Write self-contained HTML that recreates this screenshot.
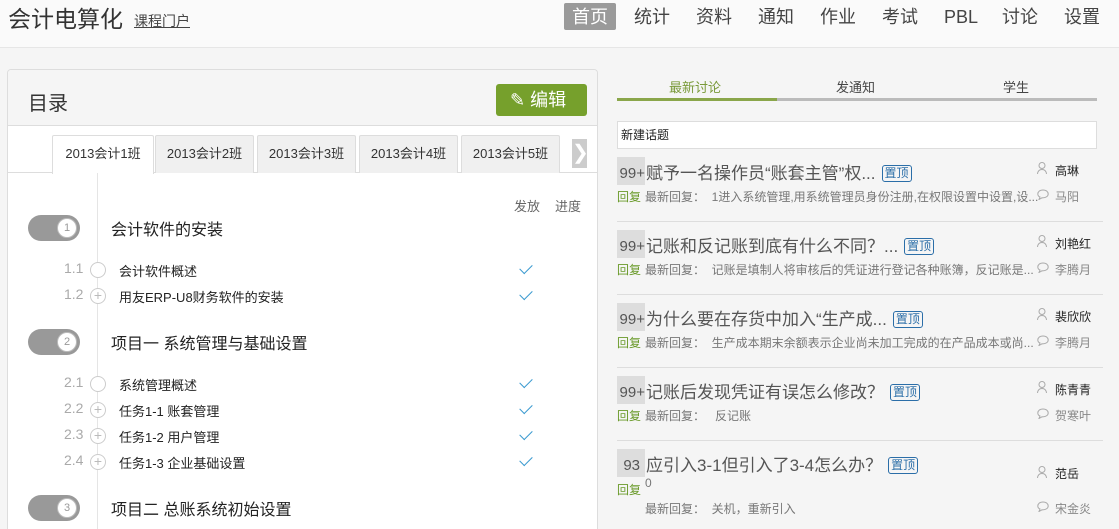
<!DOCTYPE html>
<html><head><meta charset="utf-8"><style>
*{margin:0;padding:0;box-sizing:border-box}
html,body{width:1119px;height:529px;overflow:hidden}
body{background:#f5f5f5;font-family:"Liberation Sans","Noto Sans CJK SC",sans-serif;color:#333;position:relative}
.a{position:absolute;white-space:nowrap}
.hdr{position:absolute;left:0;top:0;width:1119px;height:48px;background:#fafafa;border-bottom:1px solid #e6e6e6}
.nav{font-size:18px;color:#444;top:5px;line-height:24px}
.panel{position:absolute;left:7px;top:69px;width:591px;height:460px;border:1px solid #ddd;border-bottom:none;border-radius:4px 4px 0 0;background:#fff;overflow:hidden}
.ph{position:absolute;left:0;top:0;width:100%;height:56px;background:#f5f5f5;border-bottom:1px solid #ddd}
.tab{position:absolute;top:65px;height:38px;width:99px;background:#f0f0f0;border:1px solid #ddd;border-bottom:none;font-size:13px;text-align:center;line-height:36px;border-radius:2px 2px 0 0}
.pill{position:absolute;left:20px;width:52px;height:26px;border-radius:13px;background:#999}
.pill span{position:absolute;right:3px;top:3px;width:20px;height:20px;border-radius:50%;background:#fff;color:#999;font-size:11px;text-align:center;line-height:18px;border:1px solid #bbb}
.ch{font-size:16px;color:#222;left:103px}
.num{font-size:14px;color:#aaa;left:56px}
.sub{font-size:13px;color:#222;left:111px}
.dot{position:absolute;left:82px;width:16px;height:16px;border-radius:50%;border:1px solid #ccc;background:#fff;color:#bbb;font-size:14px;line-height:13px;text-align:center}
.chk{position:absolute;left:512px;width:12px;height:7px;border-left:1.5px solid #3a9ad0;border-bottom:1.5px solid #3a9ad0;transform:rotate(-45deg)}
.badge{position:absolute;left:617px;width:28px;height:28px;background:#ddd;color:#555;font-size:15px;line-height:20px;padding-top:7px;text-align:right}
.tt{font-size:17px;color:#555;left:646px}
.tag{display:inline-block;border:1px solid #2b6ea8;color:#2b6ea8;border-radius:3px;font-size:12px;line-height:15px;padding:0 2px;margin-left:6px;vertical-align:2px}
.rp{font-size:12px;color:#6a9a2a;left:617px}
.ls{font-size:12px;color:#777;left:645px}
.nm{font-size:12px;color:#222;left:1055px}
.nm2{font-size:12px;color:#888;left:1055px}
.sep{position:absolute;left:617px;width:486px;height:1px;background:#ddd}
.ui{position:absolute;left:1037px;width:10px;height:12px}
</style></head><body>
<div class="hdr"></div>
<div class="a" style="left:8px;top:4px;font-size:23px;color:#333;line-height:30px">会计电算化</div>
<div class="a" style="left:134px;top:11px;font-size:14px;color:#444;text-decoration:underline">课程门户</div>
<div class="a" style="left:564px;top:3px;width:52px;height:27px;background:#9a9a9a;border-radius:2px"></div>
<div class="a nav" style="left:572px;color:#fff">首页</div>
<div class="a nav" style="left:634px">统计</div>
<div class="a nav" style="left:696px">资料</div>
<div class="a nav" style="left:758px">通知</div>
<div class="a nav" style="left:820px">作业</div>
<div class="a nav" style="left:882px">考试</div>
<div class="a nav" style="left:944px">PBL</div>
<div class="a nav" style="left:1002px">讨论</div>
<div class="a nav" style="left:1064px">设置</div>

<div class="panel">
<div class="ph"></div>
<div class="a" style="left:20px;top:17px;font-size:20px;color:#333">目录</div>
<div class="a" style="left:488px;top:14px;width:91px;height:32px;background:#76a02c;border-radius:3px;color:#fff;font-size:18px;line-height:32px;padding-left:14px">✎ 编辑</div>
<div style="position:absolute;left:0;top:102px;width:100%;height:1px;background:#ddd"></div>
<div class="tab" style="left:44px;width:102px;background:#fff;height:39px">2013会计1班</div>
<div class="tab" style="left:147px">2013会计2班</div>
<div class="tab" style="left:249px">2013会计3班</div>
<div class="tab" style="left:351px">2013会计4班</div>
<div class="tab" style="left:453px">2013会计5班</div>
<div class="a" style="left:564px;top:69px;width:15px;height:29px;background:#ccc;color:#fff;font-size:20px;line-height:29px;text-align:center">❯</div>
<div style="position:absolute;left:89px;top:103px;width:1px;height:357px;background:#e5e5e5"></div>
<div class="a" style="left:506px;top:126px;font-size:13px;color:#666">发放</div>
<div class="a" style="left:547px;top:126px;font-size:13px;color:#666">进度</div>

<div class="pill" style="top:145px"><span>1</span></div>
<div class="a ch" style="top:146px">会计软件的安装</div>
<div class="a num" style="top:190px">1.1</div><div class="dot" style="top:192px"></div><div class="a sub" style="top:191px">会计软件概述</div><div class="chk" style="top:194px"></div>
<div class="a num" style="top:216px">1.2</div><div class="dot" style="top:218px">+</div><div class="a sub" style="top:217px">用友ERP-U8财务软件的安装</div><div class="chk" style="top:220px"></div>

<div class="pill" style="top:259px"><span>2</span></div>
<div class="a ch" style="top:260px">项目一 系统管理与基础设置</div>
<div class="a num" style="top:304px">2.1</div><div class="dot" style="top:306px"></div><div class="a sub" style="top:305px">系统管理概述</div><div class="chk" style="top:308px"></div>
<div class="a num" style="top:330px">2.2</div><div class="dot" style="top:332px">+</div><div class="a sub" style="top:331px">任务1-1 账套管理</div><div class="chk" style="top:334px"></div>
<div class="a num" style="top:356px">2.3</div><div class="dot" style="top:358px">+</div><div class="a sub" style="top:357px">任务1-2 用户管理</div><div class="chk" style="top:360px"></div>
<div class="a num" style="top:382px">2.4</div><div class="dot" style="top:384px">+</div><div class="a sub" style="top:383px">任务1-3 企业基础设置</div><div class="chk" style="top:386px"></div>

<div class="pill" style="top:425px"><span>3</span></div>
<div class="a ch" style="top:426px">项目二 总账系统初始设置</div>
</div>

<div class="a" style="left:669px;top:77px;font-size:13px;color:#7a9a3a">最新讨论</div>
<div class="a" style="left:836px;top:77px;font-size:13px;color:#444">发通知</div>
<div class="a" style="left:1003px;top:77px;font-size:13px;color:#444">学生</div>
<div class="a" style="left:617px;top:98px;width:480px;height:3px;background:#bbb"></div>
<div class="a" style="left:617px;top:98px;width:160px;height:3px;background:#8aa64a"></div>
<div class="a" style="left:617px;top:121px;width:480px;height:28px;background:#fff;border:1px solid #ddd;font-size:12px;line-height:26px;padding-left:3px;color:#222">新建话题</div>

<svg width="0" height="0" style="position:absolute;left:0;top:0"><defs>
<symbol id="u" viewBox="0 0 10 12"><circle cx="5" cy="3.5" r="3" fill="none" stroke="#aaa"/><path d="M0.5 12 Q1 7.5 5 7.5 Q9 7.5 9.5 12" fill="none" stroke="#aaa"/></symbol>
<symbol id="c" viewBox="0 0 12 11"><path d="M6 1 C2.5 1 0.8 3 0.8 5 C0.8 6.5 1.8 7.5 3 8 L2 10.5 L5 8.8 C9 9 11.2 7 11.2 5 C11.2 3 9.5 1 6 1Z" fill="none" stroke="#aaa"/></symbol>
</defs></svg>

<div class="badge" style="top:157px">99+</div>
<div class="a tt" style="top:159px">赋予一名操作员“账套主管”权...<span class="tag">置顶</span></div>
<svg class="ui" style="top:162px"><use href="#u"/></svg><div class="a nm" style="top:162px">高琳</div>
<div class="a rp" style="top:188px">回复</div><div class="a ls" style="top:188px">最新回复： &nbsp;1进入系统管理,用系统管理员身份注册,在权限设置中设置,设...</div>
<svg class="ui" style="top:189px;width:12px;height:11px"><use href="#c"/></svg><div class="a nm2" style="top:188px">马阳</div>
<div class="sep" style="top:221px"></div>

<div class="badge" style="top:230px">99+</div>
<div class="a tt" style="top:232px">记账和反记账到底有什么不同？...<span class="tag">置顶</span></div>
<svg class="ui" style="top:235px"><use href="#u"/></svg><div class="a nm" style="top:235px">刘艳红</div>
<div class="a rp" style="top:261px">回复</div><div class="a ls" style="top:261px">最新回复： &nbsp;记账是填制人将审核后的凭证进行登记各种账簿，反记账是...</div>
<svg class="ui" style="top:262px;width:12px;height:11px"><use href="#c"/></svg><div class="a nm2" style="top:261px">李腾月</div>
<div class="sep" style="top:294px"></div>

<div class="badge" style="top:303px">99+</div>
<div class="a tt" style="top:305px">为什么要在存货中加入“生产成...<span class="tag">置顶</span></div>
<svg class="ui" style="top:308px"><use href="#u"/></svg><div class="a nm" style="top:308px">裴欣欣</div>
<div class="a rp" style="top:334px">回复</div><div class="a ls" style="top:334px">最新回复： &nbsp;生产成本期末余额表示企业尚未加工完成的在产品成本或尚...</div>
<svg class="ui" style="top:335px;width:12px;height:11px"><use href="#c"/></svg><div class="a nm2" style="top:334px">李腾月</div>
<div class="sep" style="top:367px"></div>

<div class="badge" style="top:376px">99+</div>
<div class="a tt" style="top:378px">记账后发现凭证有误怎么修改？<span class="tag">置顶</span></div>
<svg class="ui" style="top:381px"><use href="#u"/></svg><div class="a nm" style="top:381px">陈青青</div>
<div class="a rp" style="top:407px">回复</div><div class="a ls" style="top:407px">最新回复： &nbsp;&nbsp;反记账</div>
<svg class="ui" style="top:408px;width:12px;height:11px"><use href="#c"/></svg><div class="a nm2" style="top:407px">贺寒叶</div>
<div class="sep" style="top:440px"></div>

<div class="badge" style="top:449px;padding-right:5px">93</div>
<div class="a tt" style="top:451px">应引入3-1但引入了3-4怎么办？<span class="tag">置顶</span></div>
<svg class="ui" style="top:466px"><use href="#u"/></svg><div class="a nm" style="top:465px">范岳</div>
<div class="a rp" style="top:481px">回复</div><div class="a" style="left:645px;top:476px;font-size:12px;color:#777">0</div>
<div class="a ls" style="top:500px">最新回复： &nbsp;关机，重新引入</div>
<svg class="ui" style="top:501px;width:12px;height:11px"><use href="#c"/></svg><div class="a nm2" style="top:500px">宋金炎</div>
</body></html>
